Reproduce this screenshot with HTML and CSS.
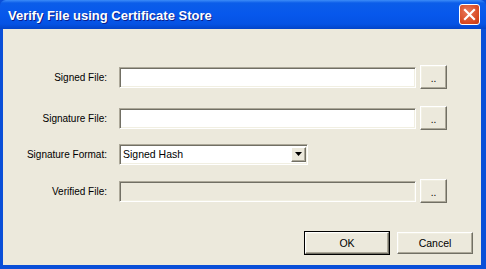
FILE: index.html
```html
<!DOCTYPE html>
<html>
<head>
 <meta charset="UTF-8">
 <title>Verify File using Certificate Store</title>
 <link rel="stylesheet" href="styles.css">
</head>
<body>
<div class="window">
  <div class="titlebar">
    <span class="title">Verify File using Certificate Store</span>
    <span class="close">
      <svg width="13" height="13" viewBox="0 0 13 13"><path d="M2 2 L11 11 M11 2 L2 11" stroke="#fff" stroke-width="2.2" stroke-linecap="square"/></svg>
    </span>
  </div>
  <div class="body">
    <div class="row row-first">
      <div class="label">Signed File:</div>
      <div class="field"></div>
      <div class="btn btn-small">..</div>
    </div>
    <div class="row row-second">
      <div class="label">Signature File:</div>
      <div class="field"></div>
      <div class="btn btn-small">..</div>
    </div>
    <div class="row row-third">
      <div class="label">Signature Format:</div>
      <div class="combo">
        <span class="combo-text">Signed Hash</span>
        <span class="combo-arrow">
          <svg width="7" height="4" viewBox="0 0 7 4"><path d="M0 0 H7 L3.5 4 Z" fill="#000"/></svg>
        </span>
      </div>
    </div>
    <div class="row row-fourth">
      <div class="label">Verified File:</div>
      <div class="field field-off"></div>
      <div class="btn btn-small">..</div>
    </div>
    <div class="actions">
      <div class="btn btn-default">OK</div>
      <div class="btn btn-cancel">Cancel</div>
    </div>
  </div>
</div>
</body>
</html>
```

FILE: styles.css
```css
body {
  margin: 0;
  background: #ffffff;
  font-family: "Liberation Sans", Arial, sans-serif;
  font-size: 10px;
  color: #000;
}
.window {
  width: 486px;
  height: 269px;
  box-sizing: border-box;
  background: #0a4fd8;
  display: flex;
  flex-direction: column;
  padding: 0 5px 4px 3px;
}
.titlebar {
  height: 29px;
  margin: 0 -5px 0 -3px;
  display: flex;
  align-items: center;
  padding: 0 6px 0 8px;
  background: linear-gradient(#3c8cf8 0px, #0b5de9 3px, #0758ec 14px, #0553e4 24px, #0344c8 29px);
  border-radius: 6px 6px 0 0;
}
.title {
  flex: 1;
  color: #fff;
  font-family: "Liberation Sans", Arial, sans-serif;
  font-weight: bold;
  font-size: 13px;
  text-shadow: 1px 1px 0 #0a1e8c;
  padding-top: 1px;
}
.close {
  width: 19px;
  height: 19px;
  border: 1px solid #fff;
  border-radius: 3px;
  background: radial-gradient(circle at 40% 35%, #e97a5c, #d7471f 70%, #c03a14);
  display: flex;
  align-items: center;
  justify-content: center;
}
.body {
  flex: 1;
  background: #ece9dc;
  display: flex;
  flex-direction: column;
}
.row {
  display: flex;
  align-items: center;
  height: 24px;
}
.row-first { margin-top: 36px; }
.row-second { margin-top: 17px; }
.row-third { margin-top: 12px; }
.row-fourth { margin-top: 13px; }
.label {
  width: 104px;
  text-align: right;
  padding-right: 12px;
}
.field {
  width: 295px;
  height: 19px;
  background: #fff;
  border-top: 1px solid #aca899;
  border-left: 1px solid #aca899;
  border-bottom: 1px solid #fff;
  border-right: 1px solid #fff;
  box-shadow: inset 1px 1px 0 #716f64, inset -1px -1px 0 #f1efe2;
  margin-right: 4px;
}
.field-off {
  background: #ece9dc;
}
.btn {
  display: flex;
  align-items: center;
  justify-content: center;
  box-sizing: border-box;
  border-top: 1px solid #fff;
  border-left: 1px solid #fff;
  border-bottom: 1px solid #716f64;
  border-right: 1px solid #716f64;
  box-shadow: inset -1px -1px 0 #aca899, inset 1px 1px 0 #f1efe2;
}
.btn-small {
  width: 27px;
  height: 24px;
  padding-top: 2px;
}
.combo {
  width: 184px;
  height: 17px;
  background: #fff;
  display: flex;
  align-items: center;
  border-top: 1px solid #aca899;
  border-left: 1px solid #aca899;
  border-bottom: 1px solid #fff;
  border-right: 1px solid #fff;
  box-shadow: inset 1px 1px 0 #716f64, inset -1px -1px 0 #f1efe2;
  padding: 1px 1px 1px 2px;
}
.combo-text {
  flex: 1;
  font-size: 10.5px;
  padding-left: 1px;
}
.combo-arrow {
  width: 15px;
  height: 15px;
  box-sizing: border-box;
  background: #ece9dc;
  display: flex;
  align-items: center;
  justify-content: center;
  border-top: 1px solid #fff;
  border-left: 1px solid #fff;
  border-bottom: 1px solid #716f64;
  border-right: 1px solid #716f64;
  box-shadow: inset -1px -1px 0 #aca899;
}
.actions {
  display: flex;
  justify-content: flex-end;
  gap: 8px;
  margin-top: 29px;
  padding-right: 8px;
}
.actions .btn {
  height: 22px;
  font-size: 10.5px;
}
.btn-default {
  width: 84px;
  outline: 1px solid #000;
  outline-offset: 0;
}
.btn-cancel {
  width: 76px;
}
```
